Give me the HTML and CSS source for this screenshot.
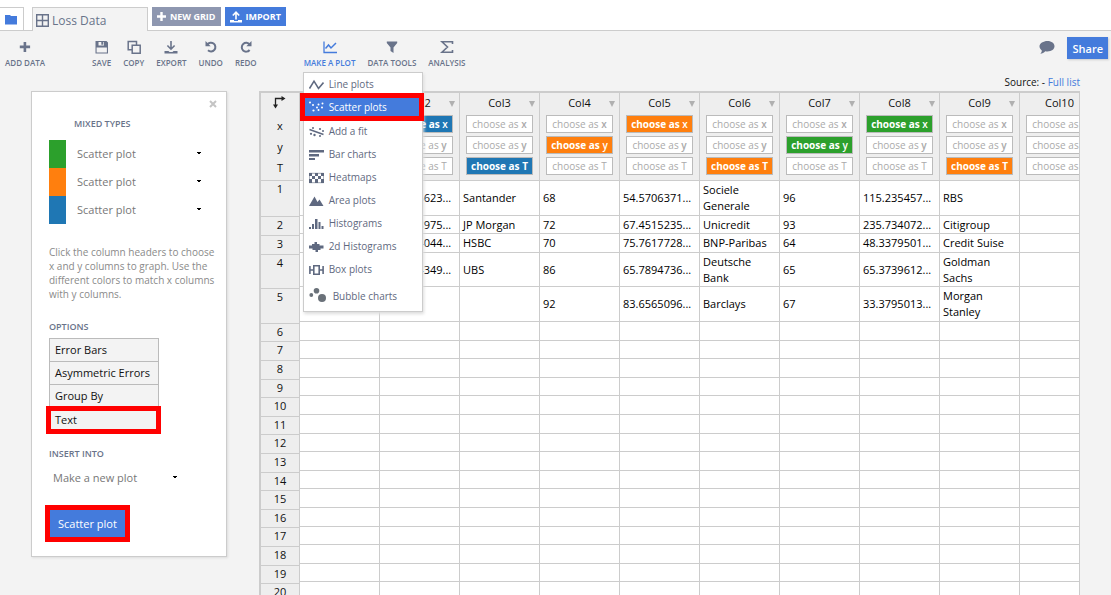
FILE: index.html
```html
<!DOCTYPE html>
<html lang="en">
<head>
<meta charset="utf-8">
<title>Loss Data</title>
<link rel="stylesheet" href="styles.css">
</head>
<body>
<header class="tabbar">
  <button class="tab tab-folder" type="button" aria-label="Files">
    <svg width="13" height="11" viewBox="0 0 13 11"><path fill="#447bdc" d="M0 1h5l1 1h6v8.500H0z"/></svg>
  </button>
  <button class="tab tab-active" type="button">
    <svg width="13" height="13" viewBox="0 0 13 13"><path fill="none" stroke="#69738a" stroke-width="1.400" d="M.7.7h11.600v11.600H.7zM6.500.7v11.600M.7 6.500h11.600"/></svg>
    Loss Data
  </button>
  <button class="action action-grid" type="button">
    <svg width="9" height="9" viewBox="0 0 9 9"><path fill="#fff" d="M3.300 0h2.400v3.300H9v2.400H5.700V9H3.300V5.700H0V3.300h3.300z"/></svg>
    NEW GRID
  </button>
  <button class="action action-import" type="button">
    <svg width="12" height="12" viewBox="0 0 12 12"><path fill="none" stroke="#fff" stroke-width="1.600" d="M6 8.500V1.500M2.800 4.500 6 1.200l3.200 3.300"/><path fill="#fff" d="M0 9h4v1h4V9h4v2.500H0z"/></svg>
    IMPORT
  </button>
</header>

<nav class="toolbar">
  <button class="tool" type="button">
    <svg width="14" height="14" viewBox="0 0 14 14"><path fill="#69738a" d="M5.600 2h2.600v3.600h3.900v2.600H8.200v3.900H5.600V8.200H1.800V5.600h3.800z"/></svg>
    ADD DATA
  </button>
  <span class="tool-group">
    <button class="tool" type="button">
      <svg width="14" height="14" viewBox="0 0 14 14"><path fill="#69738a" fill-rule="evenodd" d="M.5 1h11L13 2.500V13.500H.5zM3.500 1.900v3.600h5.500V1.900zM1.600 7.500v5h10.300v-5z"/><path fill="#69738a" d="M6.300 1.900h2v2.800h-2z"/></svg>
      SAVE
    </button>
    <button class="tool" type="button">
      <svg width="14" height="14" viewBox="0 0 14 14"><path fill="none" stroke="#69738a" stroke-width="1.500" d="M5.200 5.200h8v8h-8zM5 9.800H1.200V1.400h8.300v3.600"/></svg>
      COPY
    </button>
    <button class="tool" type="button">
      <svg width="14" height="14" viewBox="0 0 14 14"><path fill="none" stroke="#69738a" stroke-width="1.600" d="M7 1v8M3.400 5.500 7 9.200l3.600-3.700"/><path fill="#69738a" d="M.5 11h4l1 1h3l1-1h4v2.500H.5z"/></svg>
      EXPORT
    </button>
    <button class="tool" type="button">
      <svg width="14" height="14" viewBox="0 0 14 14"><path fill="none" stroke="#69738a" stroke-width="2" d="M3.300 4.600A4.400 4.400 0 1 1 4 10.300"/><path fill="#69738a" d="M1.500 1v5.200h5.200z"/></svg>
      UNDO
    </button>
    <button class="tool" type="button">
      <svg width="14" height="14" viewBox="0 0 14 14"><path fill="none" stroke="#69738a" stroke-width="2" d="M10.700 4.600A4.400 4.400 0 1 0 10.600 10"/><path fill="#69738a" d="M12.500 1v5.200H7.300z"/></svg>
      REDO
    </button>
  </span>
  <span class="tool-group">
    <span class="dropdown">
      <button class="tool tool-open" type="button">
        <svg width="14" height="14" viewBox="0 0 14 14"><path fill="none" stroke="#447bdc" stroke-width="1.300" d="M1 1.500v11h13"/><path fill="none" stroke="#447bdc" stroke-width="1.500" d="m2.500 8.500 3-3.500 2.500 3 5-5"/></svg>
        MAKE A PLOT
      </button>
      <span class="menu">
        <button class="menu-item" type="button"><svg width="15" height="12" viewBox="0 0 15 12"><path fill="none" stroke="#5f6980" stroke-width="1.600" d="M.5 9.500 5 2.200 9.500 9.500 14.500 3.500"/></svg>Line plots</button>
        <button class="menu-item menu-selected marked" type="button"><svg width="15" height="12" viewBox="0 0 15 12"><g fill="#fff"><circle cx="1" cy="1.500" r="1"/><circle cx="4" cy="4" r="1"/><circle cx="4.500" cy="9.500" r="1.100"/><circle cx="8" cy="6.500" r="1"/><circle cx="9.500" cy="9" r="1"/><circle cx="9.500" cy="3.500" r="1"/><circle cx="13" cy="6.500" r="1"/><circle cx="13.500" cy="2.500" r="1"/></g></svg>Scatter plots</button>
        <button class="menu-item" type="button"><svg width="15" height="12" viewBox="0 0 15 12"><path stroke="#5f6980" stroke-width="1.400" d="m.5 3.500 14 5"/><g fill="#5f6980"><circle cx="4" cy="2" r="1"/><circle cx="2" cy="7.800" r="1.100"/><circle cx="5.500" cy="9" r="1.200"/><circle cx="11" cy="3" r="1.100"/><circle cx="14" cy="5" r="1"/><circle cx="11" cy="10" r="1"/></g></svg>Add a fit</button>
        <button class="menu-item" type="button"><svg width="15" height="12" viewBox="0 0 15 12"><path fill="#5f6980" d="M0 1h15v2.500H0zM0 5h10v2.500H0zM0 9h6v2H0z"/></svg>Bar charts</button>
        <button class="menu-item" type="button"><svg width="15" height="12" viewBox="0 0 15 12"><path fill="#5f6980" d="M0 1h3v3H0zM6 1h3v3H6zM12 1h3v3h-3zM3 4h3v3H3zM9 4h3v3H9zM0 7h3v4H0zM6 7h3v4H6zM12 7h3v4h-3z"/><path fill="none" stroke="#5f6980" stroke-width=".6" d="M.3 1.300h14.400v9.400H.3z"/></svg>Heatmaps</button>
        <button class="menu-item" type="button"><svg width="15" height="12" viewBox="0 0 15 12"><path fill="#5f6980" d="M0 11 5.500 1.500 8.500 7 10.500 4.500 14.500 11z"/></svg>Area plots</button>
        <button class="menu-item" type="button"><svg width="15" height="12" viewBox="0 0 15 12"><path fill="#5f6980" d="M0 9h2v2H0zM3 6h2v5H3zM6 1h2.500v10H6zM9.500 4h2v7h-2zM12.500 8h2v3h-2z"/></svg>Histograms</button>
        <button class="menu-item" type="button"><svg width="15" height="12" viewBox="0 0 15 12"><path fill="#5f6980" d="M0 4.500h3V3h2.500V1H8v2h2.500v1.500h4v3h-3V9H9v2H6.500V9H3.500V7.500H0z"/></svg>2d Histograms</button>
        <button class="menu-item" type="button"><svg width="15" height="12" viewBox="0 0 15 12"><path fill="none" stroke="#5f6980" stroke-width="1.600" d="M.9 2v8M14.100 2v8M1 6h3M11 6h3M4.800 1.800h5.400v8.400H4.800z"/></svg>Box plots</button>
        <button class="menu-item menu-bubble" type="button"><svg width="18" height="16" viewBox="0 0 18 16"><g fill="#6a7179"><circle cx="2.300" cy="7" r="1.900"/><circle cx="7.500" cy="2.800" r="2.800"/><circle cx="13" cy="10" r="4"/></g></svg>Bubble charts</button>
      </span>
    </span>
    <button class="tool" type="button">
      <svg width="14" height="14" viewBox="0 0 14 14"><path fill="#69738a" d="M1.800 1.500h10.400v1.600L8.500 7.500V13L5.500 11V7.500L1.800 3.100z"/></svg>
      DATA TOOLS
    </button>
    <button class="tool" type="button">
      <svg width="14" height="14" viewBox="0 0 14 14"><path fill="none" stroke="#69738a" stroke-width="1.600" d="M12.500 4V1.800H2L7.500 7 2 12.200h10.500V10"/></svg>
      ANALYSIS
    </button>
  </span>
  <span class="toolbar-end">
    <button class="comment" type="button" aria-label="Comments">
      <svg width="16" height="14" viewBox="0 0 16 14"><path fill="#69738a" d="M8.500 0C12.600 0 15.500 2.300 15.500 5.300S12.600 10.500 8.500 10.500c-.8 0-1.500 0-2.200-.2C5 11.800 3.300 12.600 1.300 12.800c1-.9 1.500-2 1.500-3.300C1.400 8.500.5 7 .5 5.300.5 2.300 4.400 0 8.500 0z"/></svg>
    </button>
    <button class="share" type="button">Share</button>
  </span>
</nav>

<div class="workspace">
  <aside class="panel">
    <button class="close" type="button" aria-label="Close"><svg width="8" height="8" viewBox="0 0 8 8"><path stroke="#c4c4c4" stroke-width="2" d="m1 1 6 6M7 1 1 7"/></svg></button>
    <h2 class="heading heading-types">MIXED TYPES</h2>
    <div class="types">
      <label class="type"><span class="swatch green"></span><select class="picker" aria-label="Green trace type"><option>Scatter plot</option></select></label>
      <label class="type"><span class="swatch orange"></span><select class="picker" aria-label="Orange trace type"><option>Scatter plot</option></select></label>
      <label class="type"><span class="swatch blue"></span><select class="picker" aria-label="Blue trace type"><option>Scatter plot</option></select></label>
    </div>
    <p class="help">Click the column headers to choose x and y columns to graph. Use the different colors to match x columns with y columns.</p>
    <h2 class="heading">OPTIONS</h2>
    <div class="options">
      <button class="option" type="button">Error Bars</button>
      <button class="option" type="button">Asymmetric Errors</button>
      <button class="option" type="button">Group By</button>
      <button class="option option-text marked" type="button">Text</button>
    </div>
    <h2 class="heading"><label for="target">INSERT INTO</label></h2>
    <select class="picker target" id="target"><option>Make a new plot</option></select>
    <button class="submit marked" type="button">Scatter plot</button>
  </aside>

  <main class="grid">
    <p class="source">Source: - <a href="#full">Full list</a></p>
    <div class="sheet">
      <table class="index">
        <thead>
          <tr><th><svg width="13" height="13" viewBox="0 0 13 13"><path fill="none" stroke="#222" stroke-width="1.300" d="M2.500 9.500V2.500h6.500"/><path fill="#222" d="M8.500 0 12.500 2.500 8.500 5zM0 8.500h5L2.500 12.500z"/></svg><span>x</span><span>y</span><span>T</span></th></tr>
        </thead>
        <tbody>
          <tr class="first"><th>1</th></tr>
          <tr class="mid"><th>2</th></tr>
          <tr class="mid"><th>3</th></tr>
          <tr class="double"><th>4</th></tr>
          <tr class="tall"><th>5</th></tr>
        </tbody>
        <tbody class="blank">
          <tr><th>6</th></tr><tr><th>7</th></tr><tr><th>8</th></tr><tr><th>9</th></tr><tr><th>10</th></tr>
          <tr><th>11</th></tr><tr><th>12</th></tr><tr><th>13</th></tr><tr><th>14</th></tr><tr><th>15</th></tr>
          <tr><th>16</th></tr><tr><th>17</th></tr><tr><th>18</th></tr><tr><th>19</th></tr><tr><th>20</th></tr>
        </tbody>
      </table>
      <div class="columns">
        <table class="data">
          <thead>
            <tr>
              <th><span class="name">Col1</span><button class="pick" type="button">choose as <b>x</b></button><button class="pick" type="button">choose as <b>y</b></button><button class="pick" type="button">choose as T</button></th>
              <th><span class="name">Col2</span><button class="pick blue" type="button">choose as <b>x</b></button><button class="pick" type="button">choose as <b>y</b></button><button class="pick" type="button">choose as T</button></th>
              <th><span class="name">Col3</span><button class="pick" type="button">choose as <b>x</b></button><button class="pick" type="button">choose as <b>y</b></button><button class="pick blue" type="button">choose as T</button></th>
              <th><span class="name">Col4</span><button class="pick" type="button">choose as <b>x</b></button><button class="pick orange" type="button">choose as <b>y</b></button><button class="pick" type="button">choose as T</button></th>
              <th><span class="name">Col5</span><button class="pick orange" type="button">choose as <b>x</b></button><button class="pick" type="button">choose as <b>y</b></button><button class="pick" type="button">choose as T</button></th>
              <th><span class="name">Col6</span><button class="pick" type="button">choose as <b>x</b></button><button class="pick" type="button">choose as <b>y</b></button><button class="pick orange" type="button">choose as T</button></th>
              <th><span class="name">Col7</span><button class="pick" type="button">choose as <b>x</b></button><button class="pick green" type="button">choose as <b>y</b></button><button class="pick" type="button">choose as T</button></th>
              <th><span class="name">Col8</span><button class="pick green" type="button">choose as <b>x</b></button><button class="pick" type="button">choose as <b>y</b></button><button class="pick" type="button">choose as T</button></th>
              <th><span class="name">Col9</span><button class="pick" type="button">choose as <b>x</b></button><button class="pick" type="button">choose as <b>y</b></button><button class="pick orange" type="button">choose as T</button></th>
              <th><span class="name">Col10</span><button class="pick" type="button">choose as <b>x</b></button><button class="pick" type="button">choose as <b>y</b></button><button class="pick" type="button">choose as T</button></th>
            </tr>
          </thead>
          <tbody>
            <tr class="tall"><td></td><td>54.5706623...</td><td>Santander</td><td>68</td><td>54.5706371...</td><td>Sociele Generale</td><td>96</td><td>115.235457...</td><td>RBS</td><td></td></tr>
            <tr class="short"><td></td><td>67.4518975...</td><td>JP Morgan</td><td>72</td><td>67.4515235...</td><td>Unicredit</td><td>93</td><td>235.734072...</td><td>Citigroup</td><td></td></tr>
            <tr class="mid"><td></td><td>75.7614044...</td><td>HSBC</td><td>70</td><td>75.7617728...</td><td>BNP-Paribas</td><td>64</td><td>48.3379501...</td><td>Credit Suise</td><td></td></tr>
            <tr class="double"><td></td><td>65.7894349...</td><td>UBS</td><td>86</td><td>65.7894736...</td><td>Deutsche Bank</td><td>65</td><td>65.3739612...</td><td>Goldman Sachs</td><td></td></tr>
            <tr class="tall"><td></td><td></td><td></td><td>92</td><td>83.6565096...</td><td>Barclays</td><td>67</td><td>33.3795013...</td><td>Morgan Stanley</td><td></td></tr>
          </tbody>
          <tbody class="blank">
            <tr><td></td><td></td><td></td><td></td><td></td><td></td><td></td><td></td><td></td><td></td></tr>
            <tr><td></td><td></td><td></td><td></td><td></td><td></td><td></td><td></td><td></td><td></td></tr>
            <tr><td></td><td></td><td></td><td></td><td></td><td></td><td></td><td></td><td></td><td></td></tr>
            <tr><td></td><td></td><td></td><td></td><td></td><td></td><td></td><td></td><td></td><td></td></tr>
            <tr><td></td><td></td><td></td><td></td><td></td><td></td><td></td><td></td><td></td><td></td></tr>
            <tr><td></td><td></td><td></td><td></td><td></td><td></td><td></td><td></td><td></td><td></td></tr>
            <tr><td></td><td></td><td></td><td></td><td></td><td></td><td></td><td></td><td></td><td></td></tr>
            <tr><td></td><td></td><td></td><td></td><td></td><td></td><td></td><td></td><td></td><td></td></tr>
            <tr><td></td><td></td><td></td><td></td><td></td><td></td><td></td><td></td><td></td><td></td></tr>
            <tr><td></td><td></td><td></td><td></td><td></td><td></td><td></td><td></td><td></td><td></td></tr>
            <tr><td></td><td></td><td></td><td></td><td></td><td></td><td></td><td></td><td></td><td></td></tr>
            <tr><td></td><td></td><td></td><td></td><td></td><td></td><td></td><td></td><td></td><td></td></tr>
            <tr><td></td><td></td><td></td><td></td><td></td><td></td><td></td><td></td><td></td><td></td></tr>
            <tr><td></td><td></td><td></td><td></td><td></td><td></td><td></td><td></td><td></td><td></td></tr>
            <tr><td></td><td></td><td></td><td></td><td></td><td></td><td></td><td></td><td></td><td></td></tr>
          </tbody>
        </table>
      </div>
    </div>
  </main>
</div>
</body>
</html>
```
FILE: styles.css
```css
* { box-sizing: border-box; }

html { height: 100%; }

body {
  margin: 0;
  height: 100%;
  overflow: hidden;
  background: #f3f3f3;
  color: #111;
  font: 12px/17px "Open Sans", "Noto Sans", sans-serif;
}

button, select {
  margin: 0;
  padding: 0;
  border: 0;
  border-radius: 0;
  background: none;
  color: inherit;
  font: inherit;
}

svg { display: block; flex: none; }

.green { background: #2ca02c; }
.orange { background: #ff7f0e; }
.blue { background: #1f77b4; }

.marked { outline: 5px solid #f00; position: relative; }

/* Tab bar */
.tabbar {
  display: flex;
  align-items: flex-start;
  padding-top: 7px;
  background: #fff;
  box-shadow: inset 0 -1px #ccc;
}

.tab {
  display: flex;
  align-items: center;
  height: 24px;
  border: 1px solid #ccc;
}

.tab-folder {
  width: 24px;
  padding-left: 5px;
  border-left: 0;
}

.tab-active {
  width: 116px;
  margin: 0 4px 0 8px;
  padding: 1px 3px 0;
  gap: 3px;
  border-bottom: 0;
  background: #f3f3f3;
  color: #69738a;
}

.action {
  display: flex;
  align-items: center;
  height: 19px;
  margin-right: 4px;
  padding: 0 5px;
  gap: 4px;
  color: #fff;
  font-size: 9px;
  font-weight: 700;
}

.action-grid { background: #8e97b0; }
.action-import { background: #447bdc; }

/* Toolbar */
.toolbar {
  display: flex;
  align-items: flex-start;
  padding: 9px 3px 0 5px;
  gap: 47px;
}

.tool-group { display: flex; gap: 12px; }
.dropdown { position: relative; }

.tool {
  display: flex;
  flex-direction: column;
  align-items: center;
  gap: 2px;
  color: #69738a;
  font-size: 8px;
  font-weight: 600;
  line-height: 14px;
  white-space: nowrap;
}

.tool-open { color: #447bdc; }

.toolbar-end {
  display: flex;
  align-items: center;
  margin: -3px 0 0 auto;
  gap: 12px;
}

.share {
  height: 22px;
  padding: 0 5px;
  background: #447bdc;
  box-shadow: 1px 1px 2px #ccc;
  color: #fff;
  font-size: 11px;
  font-weight: 600;
}

/* Plot menu */
.menu {
  position: absolute;
  top: 32px;
  left: -1px;
  z-index: 2;
  display: flex;
  flex-direction: column;
  width: 120px;
  height: 240px;
  border: 1px solid #ccc;
  background: #fff;
  box-shadow: 1px 2px 3px #ddd;
}

.menu-item {
  display: flex;
  align-items: center;
  height: 23px;
  padding-left: 5px;
  gap: 5px;
  color: #5f6980;
  font-size: 10px;
  white-space: nowrap;
}

.menu-selected {
  height: 18px;
  margin: 2px 3px 4px 1px;
  padding-left: 4px;
  background: #447bdc;
  color: #fff;
  font-weight: 500;
}

.menu-bubble { height: 30px; gap: 6px; }

/* Side panel */
.workspace {
  display: flex;
  align-items: flex-start;
  padding: 0 31px;
  gap: 32px;
}

.panel {
  display: flex;
  flex: none;
  flex-direction: column;
  align-items: flex-start;
  width: 196px;
  margin-top: 21px;
  padding: 8px 9px 14px 17px;
  border: 1px solid #ccc;
  background: #fff;
  box-shadow: 1px 1px 2px #ddd;
}

.close { align-self: flex-end; }

.heading {
  margin: 0;
  color: #69738a;
  font-size: 9px;
  font-weight: 600;
  line-height: 14px;
}

.heading-types { margin: 9px 0 9px 25px; }

.type { display: flex; height: 28px; }
.swatch { width: 17px; }

.picker {
  width: 128px;
  margin-left: 11px;
  padding-bottom: 2px;
  appearance: none;
  background:
    linear-gradient(#000, #000) 120px 12px / 4px 1px no-repeat,
    linear-gradient(#000, #000) 121px 13px / 2px 1px no-repeat;
  color: #777;
  font-size: 11px;
}

.help {
  margin: 21px 0 19px;
  color: #8a8a8a;
  font-size: 10px;
  line-height: 14px;
}

.options {
  display: flex;
  flex-direction: column;
  width: 110px;
  margin: 4px 0 18px;
}

.option {
  height: 23px;
  padding: 0 0 2px 5px;
  border: 1px solid #bbb;
  border-bottom: 0;
  background: #f3f3f3;
  font-size: 11px;
  text-align: left;
}

.option-text {
  height: 18px;
  margin: 4px 3px 0 2px;
  padding: 0 4px 6px;
  border: 0;
}

.target {
  height: 28px;
  margin: 3px 0 18px 4px;
}

.submit {
  height: 27px;
  margin: 0 0 5px 1px;
  padding: 0 8px;
  background: #447bdc;
  color: #fff;
  font-size: 11px;
  font-weight: 500;
}

/* Sheet */
.grid { flex: 1; min-width: 0; }

.source {
  margin: 4px 0 0;
  font-size: 10px;
  text-align: right;
}

.source a { color: #447bdc; text-decoration: none; }

.sheet {
  display: flex;
  align-items: flex-start;
  border: 2px solid #ccc;
  border-width: 2px 1px 0 2px;
}

.columns { flex: 1; min-width: 0; overflow: hidden; background: #fff; }

.index, .data {
  flex: none;
  table-layout: fixed;
  border-collapse: separate;
  border-spacing: 0;
}

.index { width: 39px; background: #eee; }
.data { width: 800px; }

th, td {
  height: 0;
  padding: 0;
  border: solid #ccc;
  border-width: 0 1px 1px 0;
  font-size: 11px;
  font-weight: 400;
  line-height: 16px;
}

td { padding-left: 3px; text-align: left; color: #000; }

thead th { height: 88px; background: #eee; vertical-align: top; }

.index th { vertical-align: top; }
.index thead svg { margin: 3px 0 6px 12px; }
.index thead span { display: block; line-height: 21px; }

.name {
  position: relative;
  display: block;
  margin-bottom: 2px;
  line-height: 20px;
}

/* Column menu arrow */
.name::after {
  content: "";
  position: absolute;
  top: 8px;
  right: 4px;
  border: solid transparent;
  border-width: 6px 3px 0;
  border-top-color: #b0b0b0;
}

.pick {
  display: block;
  width: 67px;
  height: 18px;
  margin: 0 auto 3px 6px;
  border: 1px solid #bbb;
  background-color: #fff;
  color: #aaa;
  font-size: 10px;
  line-height: 14px;
  white-space: nowrap;
}

.pick b { font-weight: 600; }

.pick.green, .pick.orange, .pick.blue { color: #fff; font-weight: 700; }
.pick.green { background: #2ca02c; }
.pick.orange { background: #ff7f0e; }
.pick.blue { background: #1f77b4; }

.first th { height: 36px; }
.tall td, .tall th { height: 35px; }
.double td, .double th { height: 34px; }
.mid td, .mid th { height: 19px; }
.short td { height: 18px; }

.blank td, .blank th { height: 19px; }
.data .blank tr:nth-child(5n+2) td, .data .blank tr:nth-child(5n+4) td { height: 18px; }
.index .blank tr:nth-child(5n+1) th, .index .blank tr:nth-child(5n+4) th { height: 18px; }
```
